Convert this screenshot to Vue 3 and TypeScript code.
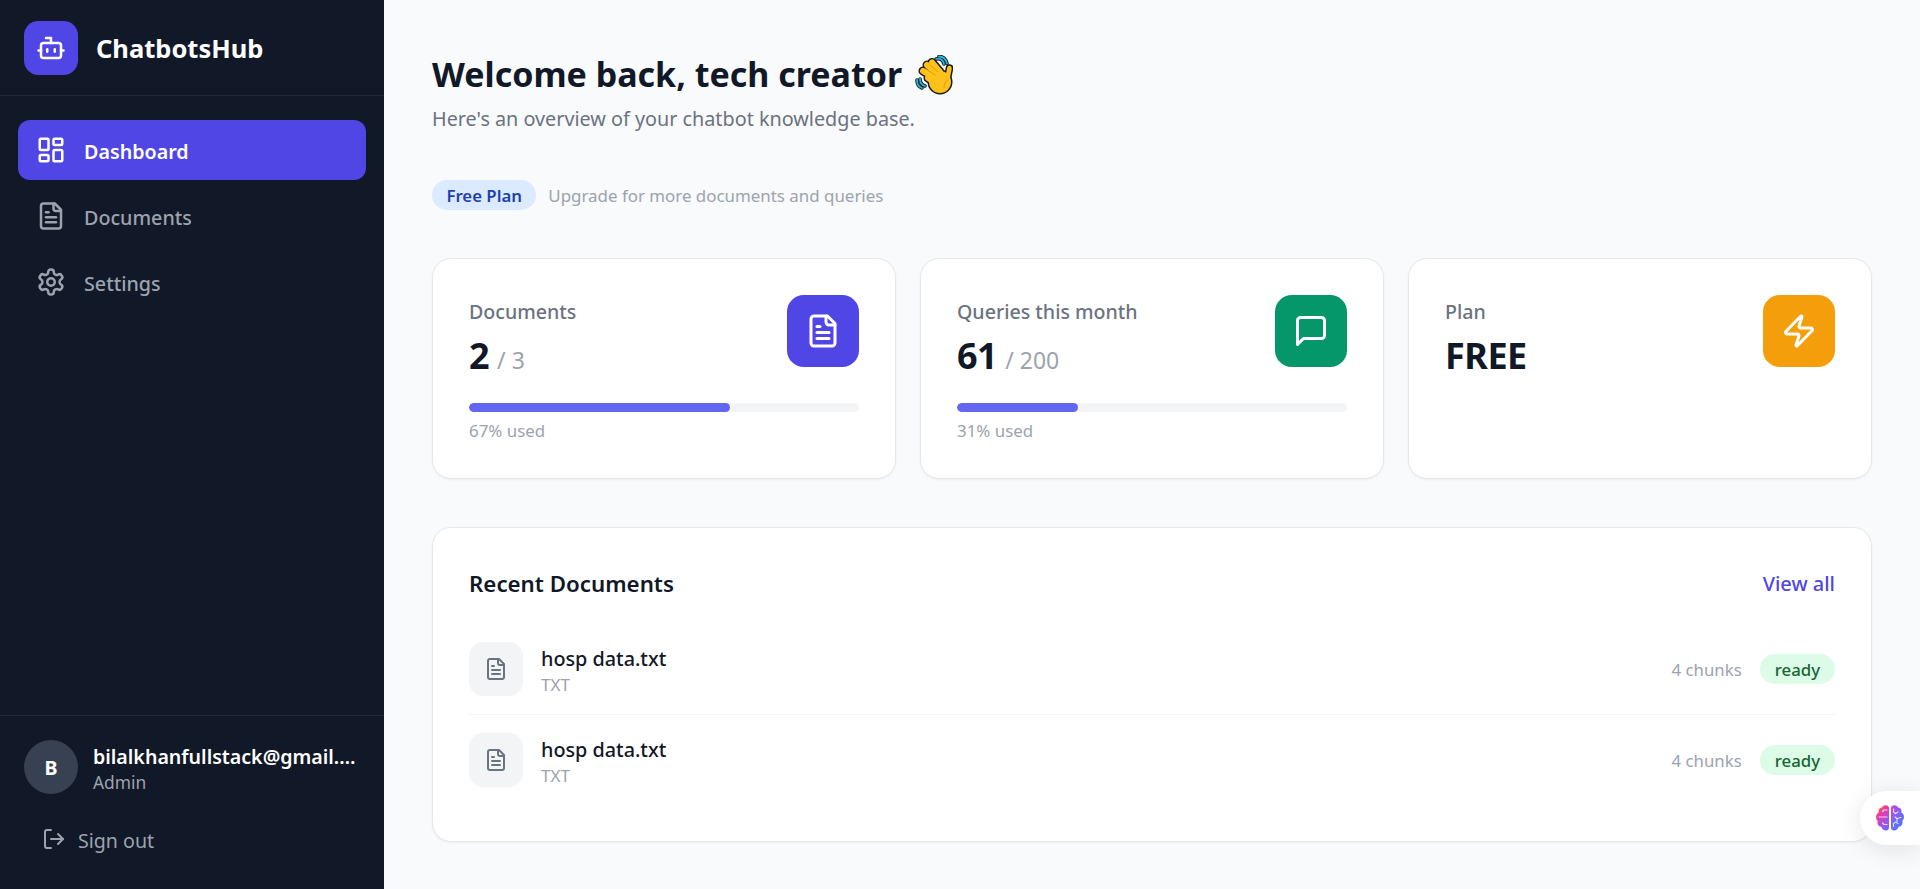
<script setup lang="ts">
interface Stat { label: string; value: string; max?: string; pct?: number; color: string; icon: string }
const stats: Stat[] = [
  { label: 'Documents', value: '2', max: '/ 3', pct: 67, color: '#4f46e5', icon: 'doc' },
  { label: 'Queries this month', value: '61', max: '/ 200', pct: 31, color: '#059669', icon: 'msg' },
  { label: 'Plan', value: 'FREE', color: '#f59e0b', icon: 'zap' },
]
const docs = [
  { name: 'hosp data.txt', type: 'TXT', chunks: '4 chunks', status: 'ready' },
  { name: 'hosp data.txt', type: 'TXT', chunks: '4 chunks', status: 'ready' },
]
const filePaths = ['M15 2H6a2 2 0 0 0-2 2v16a2 2 0 0 0 2 2h12a2 2 0 0 0 2-2V7Z', 'M14 2v4a2 2 0 0 0 2 2h4', 'M10 9H8', 'M16 13H8', 'M16 17H8']
</script>

<template>
  <div class="app">
    <aside class="sidebar">
      <div class="brand">
        <div class="logo">
          <svg class="logo-icon" viewBox="0 0 24 24"><path d="M12 8V4H8" /><rect x="4" y="8" width="16" height="12" rx="2" /><path d="M2 14h2M20 14h2M15 13v2M9 13v2" /></svg>
        </div>
        <span class="brand-name">ChatbotsHub</span>
      </div>
      <nav class="nav">
        <a class="nav-item active">
          <svg class="nav-icon" viewBox="0 0 24 24"><rect x="3" y="3" width="7" height="9" rx="1" /><rect x="14" y="3" width="7" height="5" rx="1" /><rect x="14" y="12" width="7" height="9" rx="1" /><rect x="3" y="16" width="7" height="5" rx="1" /></svg>
          <span class="nav-text">Dashboard</span>
        </a>
        <a class="nav-item">
          <svg class="nav-icon" viewBox="0 0 24 24"><path v-for="p in filePaths" :key="p" :d="p" /></svg>
          <span class="nav-text">Documents</span>
        </a>
        <a class="nav-item">
          <svg class="nav-icon" viewBox="0 0 24 24"><path d="M12.22 2h-.44a2 2 0 0 0-2 2v.18a2 2 0 0 1-1 1.73l-.43.25a2 2 0 0 1-2 0l-.15-.08a2 2 0 0 0-2.73.73l-.22.38a2 2 0 0 0 .73 2.73l.15.1a2 2 0 0 1 1 1.72v.51a2 2 0 0 1-1 1.74l-.15.09a2 2 0 0 0-.73 2.73l.22.38a2 2 0 0 0 2.73.73l.15-.08a2 2 0 0 1 2 0l.43.25a2 2 0 0 1 1 1.73V20a2 2 0 0 0 2 2h.44a2 2 0 0 0 2-2v-.18a2 2 0 0 1 1-1.73l.43-.25a2 2 0 0 1 2 0l.15.08a2 2 0 0 0 2.73-.73l.22-.39a2 2 0 0 0-.73-2.73l-.15-.08a2 2 0 0 1-1-1.74v-.5a2 2 0 0 1 1-1.74l.15-.09a2 2 0 0 0 .73-2.73l-.22-.38a2 2 0 0 0-2.73-.73l-.15.08a2 2 0 0 1-2 0l-.43-.25a2 2 0 0 1-1-1.73V4a2 2 0 0 0-2-2z" /><circle cx="12" cy="12" r="3" /></svg>
          <span class="nav-text">Settings</span>
        </a>
      </nav>
      <div class="account">
        <div class="user">
          <div class="avatar">B</div>
          <div class="user-info">
            <div class="email">bilalkhanfullstack@gmail.com</div>
            <div class="role">Admin</div>
          </div>
        </div>
        <a class="signout">
          <svg class="signout-icon" viewBox="0 0 24 24"><path d="M9 21H5a2 2 0 0 1-2-2V5a2 2 0 0 1 2-2h4" /><path d="m16 17 5-5-5-5" /><path d="M21 12H9" /></svg>
          <span class="nav-text">Sign out</span>
        </a>
      </div>
    </aside>

    <main class="main">
      <h1 class="title">
        <span>Welcome back, tech creator</span>
        <svg class="wave" viewBox="15 14 38 41">
          <g fill="none" stroke="#1a1a1a" stroke-width="3.600" stroke-linecap="round">
            <path d="M36 18c4-1 7 1 8 5" />
            <path d="M39 15.500c4 0 7 3 8 7" />
            <path d="M17 39c0 4 2 7 5 8" />
            <path d="M20 38c0 3 2 6 5 7" />
          </g>
          <g fill="none" stroke="#29b6d8" stroke-width="1.800" stroke-linecap="round">
            <path d="M36 18c4-1 7 1 8 5" />
            <path d="M39 15.500c4 0 7 3 8 7" />
            <path d="M17 39c0 4 2 7 5 8" />
            <path d="M20 38c0 3 2 6 5 7" />
          </g>
          <g fill="none" stroke="#1a1a1a" stroke-width="9" stroke-linecap="round">
            <path d="M36 37L23 30" /><path d="M37 33L27 24" /><path d="M40 31L32 21.500" /><path d="M47 40L49.500 27" stroke-width="7.600" /><path d="M34 41L28 37" />
          </g>
          <ellipse cx="40" cy="41" rx="12.500" ry="12.500" fill="#1a1a1a" />
          <g fill="none" stroke="#fcc21b" stroke-width="6" stroke-linecap="round">
            <path d="M36 37L23 30" /><path d="M37 33L27 24" /><path d="M40 31L32 21.500" /><path d="M47 40L49.500 27" stroke-width="4.600" /><path d="M34 41L28 37" />
          </g>
          <ellipse cx="40" cy="41" rx="11" ry="11" fill="#fcc21b" />
          <g fill="none" stroke="#e59600" stroke-width="0.900" stroke-linecap="round">
            <path d="M35 34L26 28" /><path d="M38 31L30 24" /><path d="M44 47c0-3 1-6 3-8" />
          </g>
        </svg>
      </h1>
      <p class="subtitle">Here's an overview of your chatbot knowledge base.</p>

      <div class="plan-row">
        <span class="plan-badge">Free Plan</span>
        <span class="plan-hint">Upgrade for more documents and queries</span>
      </div>

      <section class="stats">
        <div v-for="s in stats" :key="s.label" class="stat-card">
          <div class="stat-top">
            <div>
              <div class="stat-label">{{ s.label }}</div>
              <div class="stat-value">{{ s.value }}<span v-if="s.max" class="stat-max">{{ s.max }}</span></div>
            </div>
            <div class="stat-icon" :style="{ background: s.color }">
              <svg v-if="s.icon === 'doc'" viewBox="0 0 24 24"><path v-for="p in filePaths" :key="p" :d="p" /></svg>
              <svg v-else-if="s.icon === 'msg'" viewBox="0 0 24 24"><path d="M21 15a2 2 0 0 1-2 2H7l-4 4V5a2 2 0 0 1 2-2h14a2 2 0 0 1 2 2z" /></svg>
              <svg v-else viewBox="0 0 24 24"><path d="M4 14a1 1 0 0 1-.78-1.630l9.900-10.200a.5.5 0 0 1 .86.46l-1.920 6.020A1 1 0 0 0 13 10h7a1 1 0 0 1 .78 1.630l-9.900 10.200a.5.5 0 0 1-.86-.46l1.920-6.020A1 1 0 0 0 11 14z" /></svg>
            </div>
          </div>
          <template v-if="s.pct !== undefined">
            <div class="bar"><div class="bar-fill" :style="{ width: s.pct + '%' }"></div></div>
            <div class="bar-note">{{ s.pct }}% used</div>
          </template>
        </div>
      </section>

      <section class="recent">
        <div class="recent-head">
          <h2 class="recent-title">Recent Documents</h2>
          <a class="view-all">View all</a>
        </div>
        <div v-for="(d, i) in docs" :key="i" class="doc-row">
          <div class="doc-icon">
            <svg viewBox="0 0 24 24"><path v-for="p in filePaths" :key="p" :d="p" /></svg>
          </div>
          <div class="doc-info">
            <div class="doc-name">{{ d.name }}</div>
            <div class="doc-type">{{ d.type }}</div>
          </div>
          <span class="doc-chunks">{{ d.chunks }}</span>
          <span class="doc-status">{{ d.status }}</span>
        </div>
      </section>
    </main>

    <button class="assist" type="button" aria-label="Assistant">
      <svg viewBox="0 0 28 26">
        <defs>
          <linearGradient id="brainGrad" x1="0" y1="0.100" x2="1" y2="0.900">
            <stop offset="0" stop-color="#f97316" />
            <stop offset="0.220" stop-color="#ec38a8" />
            <stop offset="0.550" stop-color="#8b5cf6" />
            <stop offset="1" stop-color="#3b82f6" />
          </linearGradient>
        </defs>
        <path fill="url(#brainGrad)" d="M13 3.500C13 1.500 11.500 0.300 9.500 0.300 7.800 0.300 6.500 1.200 6 2.600 4 2.700 2.500 4.200 2.500 6.200 2.500 6.700 2.600 7.100 2.700 7.500 1 8.400 0 10 0 12c0 1.600.7 3 1.800 3.900-.3.600-.4 1.200-.4 1.800 0 2.200 1.700 4 3.900 4.100C6 23.900 7.800 25.500 10 25.500c1.700 0 3-1 3-3zM15 3.500C15 1.500 16.500 .3 18.500 .3c1.700 0 3 .9 3.500 2.300 2 .1 3.500 1.600 3.500 3.600 0 .5-.1.900-.2 1.300C27 8.400 28 10 28 12c0 1.600-.7 3-1.800 3.900.3.600.4 1.200.4 1.800 0 2.200-1.700 4-3.900 4.100C22 23.900 20.200 25.500 18 25.500c-1.700 0-3-1-3-3z" />
        <g fill="none" stroke="#fff" stroke-opacity="0.750" stroke-width="1.200" stroke-linecap="round" stroke-linejoin="round">
          <path d="M11 5H8L6.500 6.500" /><path d="M3 12h8" /><path d="M11 19.500H8L6.500 18" />
          <path d="M17.500 4v3l2 1.500" /><path d="M22 7l-2.500 1.500" /><path d="M25 12.500l-4 1-2-1.500" /><path d="M21 13.500v3" /><path d="M17.500 21.500v-3l2-1.500 2.500 1.500" />
        </g>
      </svg>
    </button>
  </div>
</template>

<style scoped>
.app {
  display: flex;
  min-height: 889px;
  font-family: "Noto Sans", "Open Sans", sans-serif;
  background: #f9fafb;
  color: #111827;
}
svg {
  fill: none;
  stroke: currentColor;
  stroke-width: 2;
  stroke-linecap: round;
  stroke-linejoin: round;
  display: block;
  flex: none;
}
.sidebar {
  width: 384px;
  flex: none;
  background: #111827;
  display: flex;
  flex-direction: column;
}
.brand {
  height: 96px;
  box-sizing: border-box;
  border-bottom: 1px solid #1f2937;
  padding: 21px 24px 20px;
  display: flex;
  align-items: center;
  gap: 18px;
}
.logo {
  width: 54px;
  height: 54px;
  border-radius: 14.4px;
  background: #4f46e5;
  color: #fff;
  display: flex;
  align-items: center;
  justify-content: center;
}
.logo-icon {
  width: 30px;
  height: 30px;
}
.brand-name {
  color: #fff;
  font-size: 25.5px;
  font-weight: 700;
}
.nav {
  padding: 24px 18px;
  display: flex;
  flex-direction: column;
  gap: 6px;
  flex: 1;
}
.nav-item {
  height: 60px;
  padding: 0 18px;
  border-radius: 12px;
  display: flex;
  align-items: center;
  gap: 18px;
  color: #9ca3af;
  font-size: 19.7px;
  font-weight: 500;
}
.nav-text {
  padding-top: 2px;
}
.nav-item.active {
  background: #4f46e5;
  color: #fff;
  font-weight: 600;
}
.nav-icon {
  width: 30px;
  height: 30px;
}
.account {
  border-top: 1px solid #1f2937;
  padding: 24px;
  height: 174px;
  box-sizing: border-box;
}
.user {
  display: flex;
  align-items: center;
  gap: 15px;
}
.avatar {
  width: 54px;
  height: 54px;
  flex: none;
  border-radius: 50%;
  background: #374151;
  color: #fff;
  font-size: 19.6px;
  font-weight: 700;
  display: flex;
  align-items: center;
  justify-content: center;
}
.user-info {
  min-width: 0;
  flex: 1;
}
.email {
  color: #fff;
  font-size: 19.6px;
  font-weight: 600;
  line-height: 28px;
  padding-top: 3px;
  white-space: nowrap;
  overflow: hidden;
  text-overflow: ellipsis;
}
.role {
  color: #9ca3af;
  font-size: 17.4px;
  line-height: 23px;
}
.signout {
  margin-top: 21px;
  padding-left: 18px;
  display: flex;
  align-items: center;
  gap: 12px;
  color: #9ca3af;
  font-size: 19.6px;
  height: 48px;
}
.signout-icon {
  width: 24px;
  height: 24px;
}
.main {
  flex: 1;
  min-width: 0;
  box-sizing: border-box;
  padding: 48px 48px 47px;
}
.title {
  margin: 0;
  display: flex;
  align-items: center;
  gap: 13px;
  height: 54px;
  font-size: 34px;
  font-weight: 700;
  color: #111827;
}
.title span {
  line-height: 52px;
  padding-bottom: 2px;
}
.wave {
  width: 38px;
  height: 41px;
  stroke: none;
}
.subtitle {
  margin: 3px 0 0;
  font-size: 19.8px;
  line-height: 28px;
  color: #6b7280;
}
.plan-row {
  margin-top: 47px;
  display: flex;
  align-items: center;
  gap: 12px;
}
.plan-badge {
  height: 30px;
  padding: 0 14.4px;
  border-radius: 15px;
  background: #dbeafe;
  color: #1e40af;
  font-size: 16.8px;
  font-weight: 600;
  display: flex;
  align-items: center;
}
.plan-hint {
  color: #9ca3af;
  font-size: 16.9px;
}
.stats {
  margin-top: 48px;
  display: grid;
  grid-template-columns: repeat(3, 1fr);
  gap: 24px;
}
.stat-card {
  background: #fff;
  border: 1px solid #e5e7eb;
  border-radius: 19.2px;
  padding: 36px;
  height: 221px;
  box-sizing: border-box;
  box-shadow: 0 1px 3px rgba(0, 0, 0, 0.05);
}
.stat-top {
  display: flex;
  justify-content: space-between;
  align-items: flex-start;
}
.stat-label {
  font-size: 19.6px;
  font-weight: 500;
  line-height: 34px;
  color: #6b7280;
}
.stat-value {
  margin-top: 4px;
  font-size: 36px;
  font-weight: 700;
  line-height: 46px;
  letter-spacing: -0.5px;
  color: #111827;
}
.stat-max {
  margin-left: 8px;
  font-size: 23px;
  font-weight: 400;
  letter-spacing: 0;
  color: #9ca3af;
}
.stat-icon {
  width: 72px;
  height: 72px;
  border-radius: 16.8px;
  color: #fff;
  display: flex;
  align-items: center;
  justify-content: center;
}
.stat-icon svg {
  width: 36px;
  height: 36px;
}
.bar {
  margin-top: 20px;
  height: 9px;
  border-radius: 5px;
  background: #f3f4f6;
  overflow: hidden;
}
.bar-fill {
  height: 100%;
  border-radius: 5px;
  background: #6366f1;
}
.bar-note {
  margin-top: 9px;
  font-size: 16.9px;
  line-height: 20px;
  color: #9ca3af;
}
.recent {
  margin-top: 48px;
  background: #fff;
  border: 1px solid #e5e7eb;
  border-radius: 19.2px;
  padding: 36px;
  box-shadow: 0 1px 3px rgba(0, 0, 0, 0.05);
}
.recent-head {
  display: flex;
  justify-content: space-between;
  align-items: center;
  height: 38px;
  margin-bottom: 22px;
}
.recent-title {
  margin: 0;
  font-size: 22.3px;
  font-weight: 600;
  color: #111827;
}
.view-all {
  color: #4f46e5;
  font-size: 20px;
  font-weight: 500;
}
.doc-row {
  display: flex;
  align-items: center;
  padding: 18px 0;
  border-bottom: 1px solid #f3f4f6;
}
.doc-row:last-child {
  border-bottom: 0;
}
.doc-icon {
  width: 54px;
  height: 54px;
  border-radius: 14.4px;
  background: #f3f4f6;
  color: #6b7280;
  display: flex;
  align-items: center;
  justify-content: center;
}
.doc-icon svg {
  width: 24px;
  height: 24px;
}
.doc-info {
  flex: 1;
  min-width: 0;
  margin-left: 18px;
}
.doc-name {
  font-size: 19.8px;
  font-weight: 500;
  line-height: 30px;
  padding-top: 2px;
  color: #111827;
}
.doc-type {
  font-size: 17px;
  line-height: 22px;
  color: #9ca3af;
}
.doc-chunks {
  font-size: 16.8px;
  color: #9ca3af;
  margin-right: 18px;
}
.doc-status {
  height: 30px;
  padding: 0 15px;
  border-radius: 15px;
  background: #dcfce7;
  color: #166534;
  font-size: 16.8px;
  font-weight: 500;
  display: flex;
  align-items: center;
}
.assist {
  position: fixed;
  right: 0;
  top: 791px;
  width: 60px;
  height: 54px;
  padding: 0 0 0 16px;
  border: 0;
  border-radius: 27px 0 0 27px;
  background: #fff;
  box-shadow: 0 4px 24px rgba(0, 0, 0, 0.1);
  display: flex;
  align-items: center;
}
.assist svg {
  width: 28px;
  height: 26px;
  stroke: none;
}
.assist svg g {
  stroke: #fff;
}
</style>

<style>
html, body { margin: 0; background: #f9fafb; }
</style>
